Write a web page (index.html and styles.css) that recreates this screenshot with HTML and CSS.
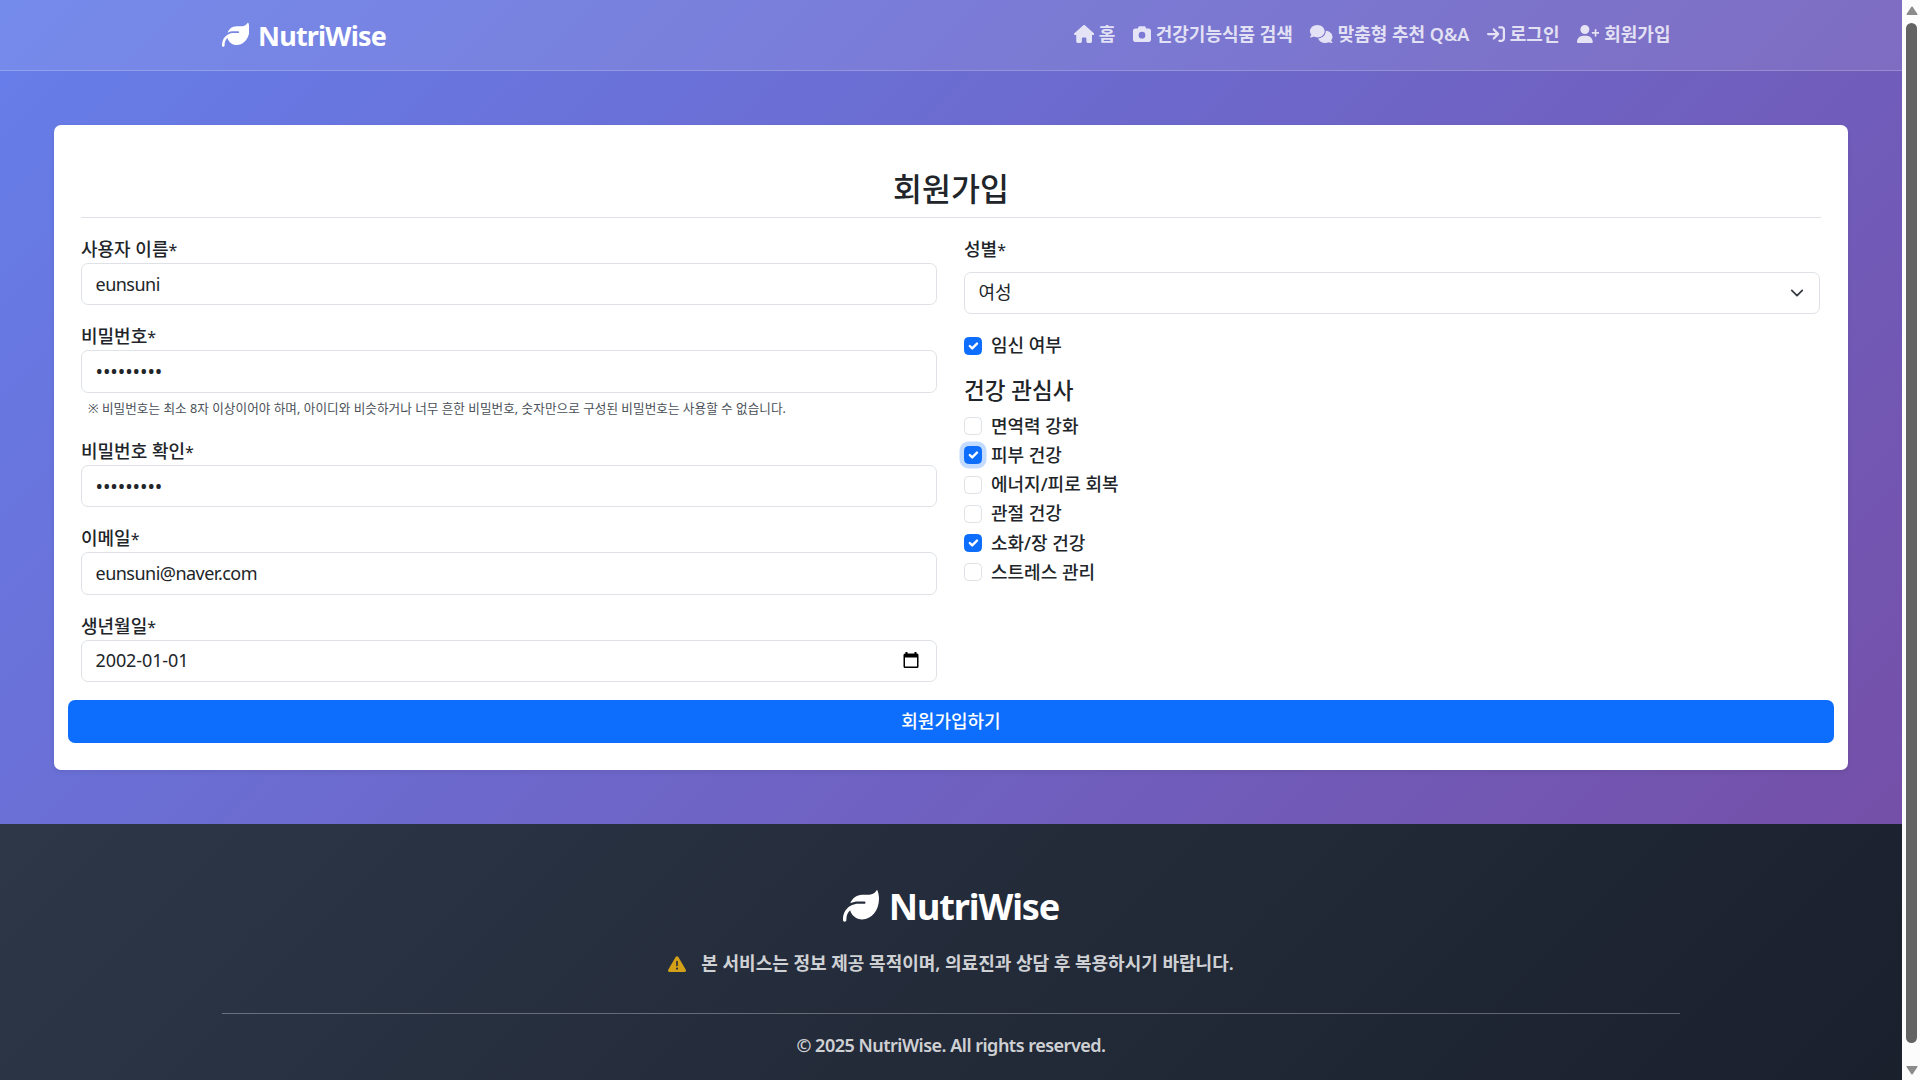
FILE: index.html
```html
<!DOCTYPE html>
<html lang="ko">
<head>
<meta charset="utf-8">
<title>NutriWise - 회원가입</title>
<link rel="stylesheet" href="styles.css">
</head>
<body>
<svg class="sprite" aria-hidden="true">
  <symbol id="leaf" viewBox="0 0 512 512"><path d="M272 96c-78.6 0-145.1 51.5-167.7 122.5c33.6-17 71.5-26.5 111.7-26.5h88c8.8 0 16 7.2 16 16s-7.2 16-16 16H288 216s0 0 0 0c-16.6 0-32.7 1.9-48.3 5.4c-25.9 5.9-49.9 16.4-71.4 30.7c0 0 0 0 0 0C38.3 298.8 0 364.9 0 440v16c0 13.3 10.7 24 24 24s24-10.7 24-24V440c0-48.7 20.7-92.5 53.8-123.2C121.6 392.3 190.3 448 272 448l1 0c132.1-.7 239-130.9 239-291.4c0-42.6-7.5-83.1-21.1-119.6c-2.6-6.9-12.7-6.6-16.2-.1C455.9 72.1 418.7 96 376 96L272 96z"/></symbol>
  <symbol id="check" viewBox="0 0 20 20"><path d="m6 10 3 3 6-6" fill="none" stroke="#fff" stroke-width="3" stroke-linecap="round" stroke-linejoin="round"/></symbol>
</svg>
<div class="page">
  <header class="navbar">
    <div class="container navbar-inner">
      <a class="brand"><svg class="brand-icon"><use href="#leaf"/></svg><span class="brand-name">NutriWise</span></a>
      <nav class="nav">
        <a class="nav-link"><svg class="nav-icon nav-icon-md" viewBox="0 0 576 512"><path d="M575.8 255.5c0 18-15 32.1-32 32.1h-32l.7 160.2c0 2.7-.2 5.4-.5 8.1V472c0 22.1-17.9 40-40 40H456c-1.1 0-2.2 0-3.3-.1c-1.4 .1-2.8 .1-4.2 .1H416 392c-22.1 0-40-17.9-40-40V448 384c0-17.7-14.3-32-32-32H256c-17.7 0-32 14.3-32 32v64 24c0 22.1-17.9 40-40 40H160 128.1c-1.5 0-3-.1-4.5-.2c-1.2 .1-2.4 .2-3.6 .2H104c-22.1 0-40-17.9-40-40V360c0-.9 0-1.9 .1-2.8V287.6H32c-18 0-32-14-32-32.1c0-9 3-17 10-24L266.4 8c7-7 15-8 22-8s15 2 21 7L564.8 231.5c8 7 12 15 11 24z"/></svg>홈</a>
        <a class="nav-link"><svg class="nav-icon" viewBox="0 0 512 512"><path d="M149.1 64.8L138.7 96H64C28.7 96 0 124.7 0 160V416c0 35.3 28.7 64 64 64H448c35.3 0 64-28.7 64-64V160c0-35.3-28.7-64-64-64H373.3L362.9 64.8C356.4 45.2 338.1 32 317.4 32H194.6c-20.7 0-39 13.2-45.5 32.8zM256 192a96 96 0 1 1 0 192 96 96 0 1 1 0-192z"/></svg>건강기능식품 검색</a>
        <a class="nav-link"><svg class="nav-icon nav-icon-lg" viewBox="0 0 640 512"><path d="M208 352c114.9 0 208-78.8 208-176S322.9 0 208 0S0 78.8 0 176c0 38.6 14.7 74.3 39.6 103.4c-3.5 9.4-8.7 17.7-14.2 24.7c-4.8 6.2-9.7 11-13.3 14.3c-1.8 1.6-3.3 2.9-4.3 3.7c-.5 .4-.9 .7-1.1 .8l-.2 .2C1 327.2-1.4 334.4 .8 340.9S9.1 352 16 352c21.8 0 43.8-5.6 62.1-12.5c9.2-3.5 17.8-7.4 25.2-11.4C134.1 343.3 169.8 352 208 352zM448 176c0 112.3-99.1 196.9-216.5 207C255.8 457.4 336.4 512 432 512c38.2 0 73.9-8.7 104.7-23.9c7.5 4 16 7.9 25.2 11.4c18.3 6.9 40.3 12.5 62.1 12.5c6.9 0 13.1-4.5 15.2-11.1c2.1-6.6-.2-13.8-5.8-17.9l-.2-.2c-.2-.2-.6-.4-1.1-.8c-1-.8-2.5-2-4.3-3.7c-3.6-3.3-8.5-8.1-13.3-14.3c-5.5-7-10.7-15.4-14.2-24.7c24.9-29 39.6-64.7 39.6-103.4c0-92.8-84.9-168.9-192.6-175.5c.4 5.1 .6 10.3 .6 15.5z"/></svg>맞춤형 추천 Q&amp;A</a>
        <a class="nav-link"><svg class="nav-icon" viewBox="0 0 512 512"><path d="M352 96l64 0c17.7 0 32 14.3 32 32l0 256c0 17.7-14.3 32-32 32l-64 0c-17.7 0-32 14.3-32 32s14.3 32 32 32l64 0c53 0 96-43 96-96l0-256c0-53-43-96-96-96l-64 0c-17.7 0-32 14.3-32 32s14.3 32 32 32zm-9.4 182.6c12.5-12.5 12.5-32.8 0-45.3l-128-128c-12.5-12.5-32.8-12.5-45.3 0s-12.5 32.8 0 45.3L242.7 224 32 224c-17.7 0-32 14.3-32 32s14.3 32 32 32l210.7 0-73.4 73.4c-12.5 12.5-12.5 32.8 0 45.3s32.8 12.5 45.3 0l128-128z"/></svg>로그인</a>
        <a class="nav-link"><svg class="nav-icon nav-icon-lg" viewBox="0 0 640 512"><path d="M96 128a128 128 0 1 1 256 0A128 128 0 1 1 96 128zM0 482.3C0 383.8 79.8 304 178.3 304h91.4C368.2 304 448 383.8 448 482.3c0 16.4-13.3 29.7-29.7 29.7H29.7C13.3 512 0 498.7 0 482.3zM504 312V248H440c-13.3 0-24-10.7-24-24s10.7-24 24-24h64V136c0-13.3 10.7-24 24-24s24 10.7 24 24v64h64c13.3 0 24 10.7 24 24s-10.7 24-24 24H552v64c0 13.3-10.7 24-24 24s-24-10.7-24-24z"/></svg>회원가입</a>
      </nav>
    </div>
  </header>

  <main class="main">
    <form class="card">
      <h1 class="card-title">회원가입</h1>
      <div class="columns">
        <div class="column">
          <div class="field"><label class="label">사용자 이름<span class="required">*</span></label><input class="control latin" type="text" value="eunsuni"></div>
          <div class="field"><label class="label">비밀번호<span class="required">*</span></label><input class="control password" type="text" value="•••••••••"><p class="help">※ 비밀번호는 최소 8자 이상이어야 하며, 아이디와 비슷하거나 너무 흔한 비밀번호, 숫자만으로 구성된 비밀번호는 사용할 수 없습니다.</p></div>
          <div class="field"><label class="label">비밀번호 확인<span class="required">*</span></label><input class="control password" type="text" value="•••••••••"></div>
          <div class="field"><label class="label">이메일<span class="required">*</span></label><input class="control latin" type="text" value="eunsuni@naver.com"></div>
          <div class="field"><label class="label">생년월일<span class="required">*</span></label>
            <div class="control control-box"><span class="date">2002-01-01</span><svg class="calendar" viewBox="0 0 16 18"><path fill-rule="evenodd" d="M2.5 1h2v1.500h7V1h2v1.500H14A1.500 1.500 0 0 1 15.500 4v11.500A1.500 1.500 0 0 1 14 17H2a1.500 1.500 0 0 1-1.500-1.500V4A1.500 1.500 0 0 1 2 2.500h.5zM2 6.500v9h12v-9z"/></svg></div>
          </div>
        </div>
        <div class="column">
          <div class="field field-gender"><label class="label">성별<span class="required">*</span></label>
            <div class="control control-box">여성<svg class="chevron" viewBox="0 0 16 16"><path fill="none" stroke="#343a40" stroke-linecap="round" stroke-linejoin="round" stroke-width="2" d="m2 5 6 6 6-6"/></svg></div>
          </div>
          <label class="option"><span class="box box-on"><svg><use href="#check"/></svg></span>임신 여부</label>
          <h2 class="interest-title">건강 관심사</h2>
          <label class="option"><span class="box"></span>면역력 강화</label>
          <label class="option"><span class="box box-on box-focus"><svg><use href="#check"/></svg></span>피부 건강</label>
          <label class="option"><span class="box"></span>에너지/피로 회복</label>
          <label class="option"><span class="box"></span>관절 건강</label>
          <label class="option"><span class="box box-on"><svg><use href="#check"/></svg></span>소화/장 건강</label>
          <label class="option"><span class="box"></span>스트레스 관리</label>
        </div>
      </div>
      <button class="submit" type="button">회원가입하기</button>
    </form>
  </main>

  <footer class="footer">
    <div class="container footer-inner">
      <div class="footer-brand"><svg class="footer-leaf"><use href="#leaf"/></svg><span class="footer-name">NutriWise</span></div>
      <p class="notice"><svg class="warning" viewBox="0 0 512 512"><path d="M256 32c14.2 0 27.3 7.5 34.5 19.8l216 368c7.3 12.4 7.3 27.7 .2 40.1S486.3 480 472 480H40c-14.3 0-27.6-7.7-34.7-20.1s-7-27.8 .2-40.1l216-368C228.7 39.5 241.8 32 256 32zm0 128c-13.3 0-24 10.7-24 24V296c0 13.3 10.7 24 24 24s24-10.7 24-24V184c0-13.3-10.7-24-24-24zm32 224a32 32 0 1 0 -64 0 32 32 0 1 0 64 0z"/></svg><span>본 서비스는 정보 제공 목적이며, 의료진과 상담 후 복용하시기 바랍니다.</span></p>
      <p class="copyright">© 2025 NutriWise. All rights reserved.</p>
    </div>
  </footer>
</div>
<div class="scrollbar">
  <svg class="arrow" viewBox="0 0 12 10"><path d="M6 1.200 10.800 8.300H1.200z"/></svg>
  <div class="thumb"></div>
  <svg class="arrow arrow-down" viewBox="0 0 12 10"><path d="M6 1.200 10.800 8.300H1.200z"/></svg>
</div>
</body>
</html>
```
FILE: styles.css
```css
* { box-sizing: border-box; }

body {
  margin: 0;
  height: 1080px;
  overflow: hidden;
  display: flex;
  font-family: "Noto Sans", "Noto Sans CJK KR", sans-serif;
  font-size: 18px;
  line-height: 27px;
  color: #212529;
}

.sprite { position: absolute; width: 0; height: 0; }

.page {
  flex: 1;
  height: 1098px;
  display: flex;
  flex-direction: column;
  background: linear-gradient(135deg, #667eea 0%, #764ba2 100%);
}

.container { width: 1458px; margin: 0 auto; }

/* Navigation bar */
.navbar {
  flex: none;
  height: 71px;
  background: rgba(255, 255, 255, .1);
  border-bottom: 1px solid rgba(255, 255, 255, .2);
}
.navbar-inner { height: 70px; display: flex; justify-content: space-between; align-items: center; padding-right: 9.5px; }
.brand { display: flex; align-items: center; gap: 9px; color: #fff; }
.brand-icon { width: 27.5px; height: 27.5px; margin-left: -.5px; fill: #fff; }
.brand-name { font-size: 27px; font-weight: 700; letter-spacing: -.8px; }
.nav { display: flex; gap: 17.5px; padding-bottom: 2px; }
.nav-link { display: flex; align-items: center; gap: 4.8px; font-weight: 600; color: rgba(255, 255, 255, .8); white-space: nowrap; }
.nav-icon { width: 18px; height: 18px; fill: currentColor; }
.nav-icon-md { width: 20.25px; }
.nav-icon-lg { width: 22.5px; }

/* Sign-up card */
.main { height: 753px; flex: none; padding: 54px; }
.card {
  height: 645px;
  padding: 45px 27px 0;
  background: #fff;
  border-radius: 7px;
  box-shadow: 0 2px 5px rgba(0, 0, 0, .075);
}
.card-title {
  height: 48px;
  margin: 0 0 18px;
  border-bottom: 1px solid #dee2e6;
  font-size: 31.5px;
  line-height: 38px;
  font-weight: 500;
  text-align: center;
}
.columns { height: 464px; display: grid; grid-template-columns: 856px 856px; gap: 27px; }
.column { display: flex; flex-direction: column; }
.field { margin-bottom: 18.2px; }
.label { display: block; font-weight: 500; line-height: 27px; }
.required { font-weight: 400; font-size: 16px; line-height: 1; }
.control {
  display: block;
  width: 100%;
  height: 42.2px;
  padding: 0 13.5px;
  border: 1px solid #dee2e6;
  border-radius: 7px;
  background: #fff;
  color: #212529;
  font: inherit;
  outline: none;
}
.latin { letter-spacing: -.52px; padding-bottom: 1px; }
.password { font-size: 20px; letter-spacing: -.1px; }
.date { letter-spacing: -.1px; }
.control-box { display: flex; align-items: center; justify-content: space-between; padding-bottom: 1px; }
.help { margin: 4px 0 0; padding-left: 7px; font-size: 12.6px; line-height: 23.2px; letter-spacing: .05px; color: #495057; white-space: nowrap; }
.calendar { width: 16px; height: 18px; margin-right: 4px; fill: #000; }
.field-gender .label { margin-bottom: 9px; }
.chevron { width: 14px; height: 14px; margin-right: 2px; }
.interest-title { margin: 15px 0 9px; font-size: 22.5px; line-height: 27px; font-weight: 500; }
.option { display: flex; align-items: center; gap: 9px; height: 27px; margin-bottom: 2.25px; font-weight: 500; }
.box { width: 18px; height: 18px; border: 1px solid #dee2e6; border-radius: 4.5px; display: flex; }
.box svg { width: 16px; height: 16px; }
.box-on { background: #0d6efd; border-color: #0d6efd; }
.box-focus { box-shadow: 0 0 0 4.5px rgba(13, 110, 253, .25); }
.submit {
  display: block;
  width: 1766px;
  height: 43px;
  margin: 0 -13px;
  border: 0;
  border-radius: 7px;
  background: #0d6efd;
  color: #fff;
  font: inherit;
  font-weight: 500;
}

/* Footer */
.footer { flex: 1; background: linear-gradient(135deg, #2d3748 0%, #1a202c 100%); color: #fff; }
.footer-inner { padding-top: 55px; text-align: center; }
.footer-brand { display: flex; justify-content: center; align-items: center; gap: 10px; height: 54px; }
.footer-leaf { width: 36px; height: 36px; fill: #fff; }
.footer-name { font-size: 36px; font-weight: 700; letter-spacing: -1.1px; }
.notice {
  display: flex;
  justify-content: center;
  align-items: center;
  gap: 15px;
  height: 27px;
  margin: 17px 0 36px;
  font-weight: 600;
  color: rgba(255, 255, 255, .8);
}
.warning { width: 18px; height: 18px; fill: #d4a017; }
.copyright { margin: 0; padding-top: 18px; border-top: 1px solid rgba(255, 255, 255, .3); font-weight: 600; letter-spacing: -.5px; color: rgba(255, 255, 255, .8); }

/* Window scrollbar */
.scrollbar { flex: none; width: 19px; height: 1080px; padding-top: 6px; display: flex; flex-direction: column; align-items: center; background: #fcfcfc; }
.thumb { width: 11px; height: 1020px; margin: 7px 0 22px; border-radius: 6px; background: #636363; }
.arrow { flex: none; width: 12px; height: 10px; fill: #8b8b8b; stroke: #8b8b8b; stroke-width: 1.5; stroke-linejoin: round; }
.arrow-down { transform: rotate(180deg); }
```
